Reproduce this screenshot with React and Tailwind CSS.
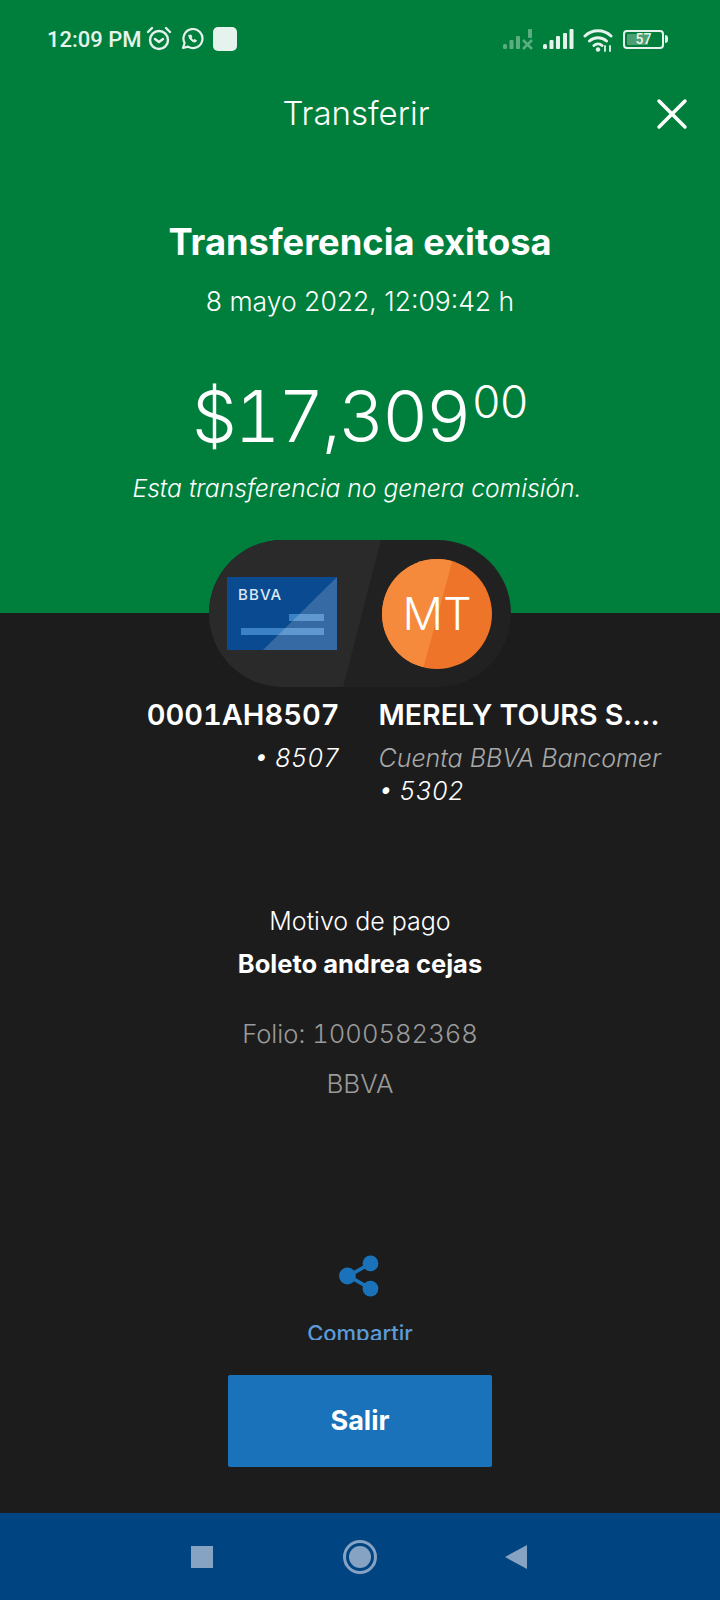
import React from 'react'
import { X } from 'lucide-react'

function SignalBars({ className }) {
  return (
    <svg width="31" height="21" viewBox="0 0 31 21" className={className} fill="currentColor">
      <rect x="0" y="15" width="4" height="5" rx="1.500" />
      <rect x="6.500" y="11" width="4" height="9" rx="1" />
      <rect x="13" y="7" width="4" height="13" rx="1" />
      <rect x="20" y="4" width="4" height="16" rx="1" />
      <rect x="26.500" y="0" width="4" height="20" rx="1" />
    </svg>
  )
}

function NoSignalBars({ className }) {
  return (
    <svg width="31" height="21" viewBox="0 0 31 21" className={className} fill="currentColor">
      <rect x="0" y="15" width="4" height="5" rx="1.500" />
      <rect x="6.500" y="11" width="4" height="9" rx="1" />
      <rect x="13" y="7" width="4" height="13" rx="1" />
      <rect x="25" y="0" width="4" height="9" rx="1" />
      <path d="M20 11l9 9M29 11l-9 9" stroke="currentColor" strokeWidth="2.500" fill="none" />
    </svg>
  )
}

function StatusBar() {
  return (
    <div className="flex items-center justify-between h-[30px] mt-6 pl-[47px] pr-[52px] text-[#e6f3ec]">
      <div className="flex items-center">
        <span className="text-[22px] font-medium font-['Roboto',sans-serif] w-[98px]">12:09 PM</span>
        <svg width="28" height="26" viewBox="0 0 28 26" fill="none" stroke="currentColor" strokeWidth="2.400" strokeLinecap="round" strokeLinejoin="round">
          <circle cx="14" cy="14" r="9" />
          <path d="M10 13l4 3 4-3M3 6l4-4M25 6l-4-4" />
        </svg>
        <svg width="24" height="24" viewBox="0 0 24 24" fill="none" stroke="currentColor" strokeWidth="2.200" strokeLinecap="round" strokeLinejoin="round" className="ml-[7px]">
          <path d="M3 21l1.600-5A9.500 9.500 0 1 1 8 19.600L3 21z" />
          <path d="M9 8.500c-.6 3 3.500 7 6.500 6.500l1-1.500-2.200-1-1 .8c-1-.5-1.700-1.200-2.200-2.200l.8-1-1-2.200L9 8.500z" fill="currentColor" strokeWidth="1" />
        </svg>
        <div className="w-6 h-6 rounded-[5px] bg-[#e6f3ec] ml-[9px]" />
      </div>
      <div className="flex items-center">
        <NoSignalBars className="opacity-40" />
        <SignalBars className="ml-[9px]" />
        <svg width="31" height="25" viewBox="0 0 31 25" fill="none" stroke="currentColor" strokeWidth="3" strokeLinecap="round" className="ml-[9px]">
          <path d="M2 9a19 19 0 0 1 26 0M6.500 14a12.500 12.500 0 0 1 17 0M11 18.500a6 6 0 0 1 8 0" />
          <circle cx="15" cy="22.500" r="2.200" fill="currentColor" stroke="none" />
          <path d="M22 19v5M27 19v5" strokeWidth="1.800" />
        </svg>
        <div className="ml-[9px] flex items-center">
          <div className="relative w-[41px] h-[19px] rounded-[4px] border-2 border-[#e6f3ec] p-[2px] flex">
            <div className="w-[21px] bg-[#4d9f72] rounded-[1px]" />
            <span className="absolute inset-0 flex items-center justify-center text-[14px] leading-none font-['Roboto',sans-serif] font-medium">57</span>
          </div>
          <div className="w-[3px] h-[8px] bg-[#e6f3ec] ml-[1px] rounded-r" />
        </div>
      </div>
    </div>
  )
}

function CardIcon() {
  return (
    <svg width="110" height="73" viewBox="0 0 110 73">
      <rect width="110" height="73" fill="#0a4a91" />
      <rect x="14" y="51" width="83" height="7" fill="#3b82c4" />
      <rect x="62" y="37" width="35" height="7" fill="#3b82c4" />
      <polygon points="110,0 110,73 36,73" fill="#ffffff" fillOpacity="0.180" />
      <text x="11" y="23" fill="#dbe8f5" fontSize="15" fontWeight="500" fontFamily="Inter, sans-serif" letterSpacing="1.100">BBVA</text>
    </svg>
  )
}

function TransferPill() {
  return (
    <div className="relative z-10 -mt-[73px] mx-auto w-[302px] h-[147px] rounded-full bg-[#212121] flex items-center overflow-hidden shrink-0">
      <div className="absolute inset-y-0 left-0 w-[172px] bg-[#2a2a2a] [clip-path:polygon(0_0,100%_0,78%_100%,0_100%)]" />
      <div className="relative ml-[18px]">
        <CardIcon />
      </div>
      <div className="relative ml-[45px] w-[110px] h-[110px] rounded-full overflow-hidden bg-[#ee7429] flex items-center justify-center">
        <div className="absolute inset-y-0 left-0 w-[71px] bg-[#f58a3c] [clip-path:polygon(0_0,100%_0,58%_100%,0_100%)]" />
        <span className="relative text-white text-[45px] font-light">MT</span>
      </div>
    </div>
  )
}

export default function App() {
  return (
    <div className="w-[720px] h-[1600px] flex flex-col bg-[#1c1c1c] text-white overflow-hidden font-['Inter',sans-serif]">
      <section className="h-[613px] shrink-0 bg-[#007f3c] flex flex-col">
        <StatusBar />
        <div className="relative mt-[27px] h-[66px] flex items-center justify-center pr-[8px]">
          <h1 className="text-[33px] font-light">Transferir</h1>
          <X size={52} strokeWidth={1.600} className="absolute right-[22px] top-[7px]" />
        </div>
        <h2 className="mt-[71px] text-center text-[36.300px] leading-[48px] font-bold">Transferencia exitosa</h2>
        <p className="mt-[18px] text-center text-[26.500px] leading-[34px] font-light">8 mayo 2022, 12:09:42 h</p>
        <div className="mt-[53px] flex justify-center items-start font-light h-[90px]">
          <span className="text-[71px] leading-[90px] tabular-nums tracking-[-2.300px]">$17,309</span>
          <span className="mt-[4px] ml-[3px] text-[45px] leading-[54px]">00</span>
        </div>
        <p className="mt-[9px] pr-[6px] text-center text-[24.700px] leading-[36px] font-light italic">Esta transferencia no genera comisión.</p>
      </section>

      <section className="flex-1 flex flex-col items-center min-h-0">
        <TransferPill />
        <div className="mt-[10px] w-full grid grid-cols-2 gap-x-[39px] pl-[20px] pr-[58px] translate-x-[18px]">
          <div className="text-right">
            <p className="text-[29px] leading-[36px] font-semibold tabular-nums whitespace-nowrap">0001AH8507</p>
            <p className="mt-[8px] text-[25px] leading-[34px] font-light italic tabular-nums">• 8507</p>
          </div>
          <div>
            <p className="text-[28.500px] leading-[36px] font-semibold whitespace-nowrap">MERELY TOURS S....</p>
            <p className="mt-[8px] text-[25px] leading-[34px] font-light italic text-[#a8a8a8] whitespace-nowrap">Cuenta BBVA Bancomer</p>
            <p className="-mt-[1px] text-[25px] leading-[34px] font-light italic tabular-nums">• 5302</p>
          </div>
        </div>
        <p className="mt-[96px] text-[25px] leading-[34px] font-light">Motivo de pago</p>
        <p className="mt-[9px] text-[25.500px] leading-[34px] font-bold">Boleto andrea cejas</p>
        <p className="mt-[36px] text-[25.600px] leading-[34px] font-light text-[#9a9a9a] tabular-nums">Folio: 1000582368</p>
        <p className="mt-[16px] text-[26px] leading-[34px] font-light text-[#9a9a9a]">BBVA</p>
        <svg width="44" height="44" viewBox="0 0 42 42" className="mt-[153px] text-[#1a73ba]" fill="currentColor" stroke="currentColor">
          <path d="M31 9L10 21l21 12" fill="none" strokeWidth="3.500" />
          <circle cx="31" cy="9" r="7.500" stroke="none" />
          <circle cx="9" cy="21" r="8" stroke="none" />
          <circle cx="31" cy="33" r="7.500" stroke="none" />
        </svg>
        <div className="h-[25px] mt-[17px] overflow-hidden">
          <p className="text-[22px] leading-[36px] font-medium text-[#5a9bd8]">Compartir</p>
        </div>
        <button className="mt-[35px] w-[264px] h-[92px] bg-[#1a73ba] rounded-[2px] text-[27px] font-bold text-white">Salir</button>
      </section>

      <nav className="h-[87px] shrink-0 bg-[#004481] flex items-center justify-center pr-[2px]">
        <div className="w-[22px] h-[22px] bg-[#86a3c4]" />
        <div className="ml-[130px] mr-[128px] w-[34px] h-[34px] rounded-full border-[3px] border-[#86a3c4] p-[3px]">
          <div className="w-full h-full rounded-full bg-[#86a3c4]" />
        </div>
        <svg width="22" height="26" viewBox="0 0 22 26" fill="#86a3c4"><polygon points="22,1 22,25 0,13" /></svg>
      </nav>
    </div>
  )
}
